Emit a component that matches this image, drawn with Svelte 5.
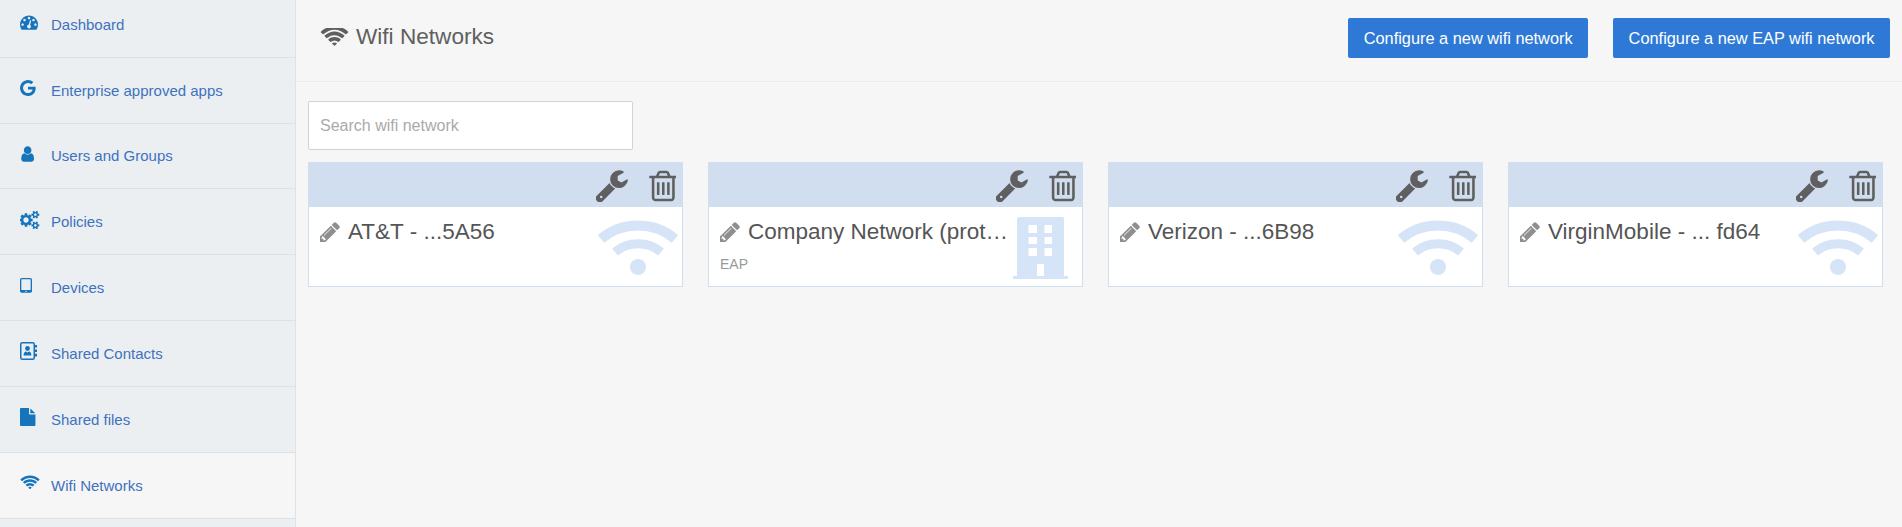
<script>
  const wifiPath = 'M1024 1523q-20 0-93-73.5t-73-93.5q0-32 62.5-54t103.5-22 103.5 22 62.5 54q0 20-73 93.5t-93 73.5zm270-271q-2 0-40-25t-101.5-50-128.5-25-128.5 25-101 50-40.5 25q-18 0-93.5-75t-75.5-93q0-13 10-23 78-77 196-121t233-44 233 44 196 121q10 10 10 23 0 18-75.5 93t-93.5 75zm273-272q-11 0-23-8-136-105-252-154.5t-268-49.5q-85 0-170.5 22t-149 53-113.5 62-79 53-31 22q-17 0-92-75t-75-93q0-12 10-22 132-132 320-205t380-73 380 73 320 205q10 10 10 22 0 18-75 93t-92 75zm271-271q-11 0-22-9-179-157-371.5-236.5t-420.5-79.5-420.5 79.5-371.5 236.5q-11 9-22 9-17 0-92.5-75t-75.5-93q0-13 10-23 187-186 445-288t527-102 527 102 445 288q10 10 10 23 0 18-75.5 93t-92.5 75z';
  const pencilPath = 'M491 1536l91-91-235-235-91 91v107h128v128h107zm523-928q0-22-22-22-10 0-17 7l-542 542q-7 7-7 17 0 22 22 22 10 0 17-7l542-542q7-7 7-17zm-54-192l416 416-832 832h-416v-416zm683 96q0 53-37 90l-166 166-416-416 166-165q36-38 90-38 53 0 91 38l235 234q37 39 37 91z';
  const wrenchPath = 'M448 1472q0-26-19-45t-45-19-45 19-19 45 19 45 45 19 45-19 19-45zm644-420l-682 682q-37 37-90 37-52 0-91-37l-106-108q-38-36-38-90 0-53 38-91l681-681q39 98 114.5 173.5t173.5 114.5zm634-435q0 39-23 106-47 134-164.5 217.5t-258.5 83.5q-185 0-316.5-131.5t-131.5-316.5 131.5-316.5 316.5-131.5q58 0 121.5 16.5t107.5 46.5q16 11 16 28t-16 28l-293 169v224l193 107q5-3 79-48.5t135.5-81 70.5-35.5q15 0 23.5 10t8.5 25z';
  const trashPath = 'M704 736v576q0 14-9 23t-23 9h-64q-14 0-23-9t-9-23v-576q0-14 9-23t23-9h64q14 0 23 9t9 23zm256 0v576q0 14-9 23t-23 9h-64q-14 0-23-9t-9-23v-576q0-14 9-23t23-9h64q14 0 23 9t9 23zm256 0v576q0 14-9 23t-23 9h-64q-14 0-23-9t-9-23v-576q0-14 9-23t23-9h64q14 0 23 9t9 23zm128 724v-948h-896v948q0 22 7 40.5t14.5 27 10.5 8.5h832q3 0 10.5-8.5t14.5-27 7-40.5zm-672-1076h448l-48-117q-7-9-17-11h-317q-10 2-17 11zm928 32v64q0 14-9 23t-23 9h-96v948q0 83-47 143.5t-113 60.5h-832q-66 0-113-58.5t-47-141.5v-952h-96q-14 0-23-9t-9-23v-64q0-14 9-23t23-9h309l70-167q15-37 54-63t79-26h320q40 0 79 26t54 63l70 167h309q14 0 23 9t9 23z';

  const nav = [
    { label: 'Dashboard', box: '0 0 1792 1792', w: 18, path: 'M384 1152q0-53-37.5-90.5t-90.5-37.5-90.5 37.5-37.5 90.5 37.5 90.5 90.5 37.5 90.5-37.5 37.5-90.5zm192-448q0-53-37.5-90.5t-90.5-37.5-90.5 37.5-37.5 90.5 37.5 90.5 90.5 37.5 90.5-37.5 37.5-90.5zm428 481l101-382q6-26-7.5-48.5t-38.5-29.5-48 6.5-30 39.5l-101 382q-60 5-107 43.5t-63 98.5q-20 77 20 146t117 89 146-20 89-117q16-60-6-117t-72-91zm660-33q0-53-37.5-90.5t-90.5-37.5-90.5 37.5-37.5 90.5 37.5 90.5 90.5 37.5 90.5-37.5 37.5-90.5zm-640-640q0-53-37.5-90.5t-90.5-37.5-90.5 37.5-37.5 90.5 37.5 90.5 90.5 37.5 90.5-37.5 37.5-90.5zm448 192q0-53-37.5-90.5t-90.5-37.5-90.5 37.5-37.5 90.5 37.5 90.5 90.5 37.5 90.5-37.5 37.5-90.5zm320 448q0 261-141 483-19 29-54 29h-1402q-35 0-54-29-141-221-141-483 0-182 71-348t191-286 286-191 348-71 348 71 286 191 191 286 71 348z' },
    { label: 'Enterprise approved apps', box: '128 128 1536 1536', w: 16, path: 'M896 786h725q12 67 12 128 0 217-91 387.5t-259.5 266.5-386.5 96q-157 0-299-60.5t-245-163.5-163.5-245-60.5-299 60.5-299 163.5-245 245-163.5 299-60.5q300 0 515 201l-209 201q-123-119-306-119-129 0-238.5 65t-173.5 176.5-64 243.5 64 243.5 173.5 176.5 238.5 65q87 0 160-24t120-60 82-82 51.5-87 22.5-78h-436v-264z' },
    { label: 'Users and Groups', box: '128 128 1408 1536', w: 14, path: 'M1536 1399q0 109-62.5 187t-150.5 78h-854q-88 0-150.5-78t-62.5-187q0-85 8.5-160.5t31.5-152 58.5-131 94-89 134.5-34.5q131 128 313 128t313-128q76 0 134.5 34.5t94 89 58.5 131 31.5 152 8.5 160.5zm-256-887q0 159-112.5 271.5t-271.5 112.5-271.5-112.5-112.5-271.5 112.5-271.5 271.5-112.5 271.5 112.5 112.5 271.5z' },
    { label: 'Policies', box: '0 128 1920 1536', w: 20, path: 'M832 896q0-106-75-181t-181-75-181 75-75 181 75 181 181 75 181-75 75-181zm768 512q0-52-38-90t-90-38-90 38-38 90q0 53 37.5 90.5t90.5 37.5 90.5-37.5 37.5-90.5zm0-1024q0-52-38-90t-90-38-90 38-38 90q0 53 37.5 90.5t90.5 37.5 90.5-37.5 37.5-90.5zm-384 421v185q0 10-7 19.5t-16 10.5l-155 24q-11 35-32 76 34 48 90 115 7 11 7 20 0 12-7 19-23 30-82.5 89.5t-78.5 59.5q-11 0-21-7l-115-90q-37 19-77 31-11 108-23 155-7 24-30 24h-186q-11 0-20-7.5t-10-17.5l-23-153q-34-10-75-31l-118 89q-7 7-20 7-11 0-21-8-144-133-144-160 0-9 7-19 10-14 41-53t47-61q-23-44-35-82l-152-24q-10-1-17-9.5t-7-19.5v-185q0-10 7-19.5t16-10.5l155-24q11-35 32-76-34-48-90-115-7-11-7-20 0-12 7-20 22-30 82-89t79-59q11 0 21 7l115 90q34-18 77-32 11-108 23-154 7-24 30-24h186q11 0 20 7.5t10 17.5l23 153q34 10 75 31l118-89q8-7 20-7 11 0 21 8 144 133 144 160 0 8-7 19-12 16-42 54t-45 60q23 48 34 82l152 23q10 2 17 10.5t7 19.5zm640 533v140q0 16-149 31-12 27-30 52 51 113 51 138 0 4-4 7-122 71-124 71-8 0-46-47t-52-68q-20 2-30 2t-30-2q-14 21-52 68t-46 47q-2 0-124-71-4-3-4-7 0-25 51-138-18-25-30-52-149-15-149-31v-140q0-16 149-31 13-29 30-52-51-113-51-138 0-4 4-7 4-2 35-20t59-34 30-16q8 0 46 46.5t52 67.5q20-2 30-2t30 2q51-71 92-112l6-2q4 0 124 70 4 3 4 7 0 25-51 138 17 23 30 52 149 15 149 31zm0-1024v140q0 16-149 31-12 27-30 52 51 113 51 138 0 4-4 7-122 71-124 71-8 0-46-47t-52-68q-20 2-30 2t-30-2q-14 21-52 68t-46 47q-2 0-124-71-4-3-4-7 0-25 51-138-18-25-30-52-149-15-149-31v-140q0-16 149-31 13-29 30-52-51-113-51-138 0-4 4-7 4-2 35-20t59-34 30-16q8 0 46 46.5t52 67.5q20-2 30-2t30 2q51-71 92-112l6-2q4 0 124 70 4 3 4 7 0 25-51 138 17 23 30 52 149 15 149 31z' },
    { label: 'Devices', box: '320 128 1152 1536', w: 12, path: 'M960 1408q0-26-19-45t-45-19-45 19-19 45 19 45 45 19 45-19 19-45zm384-160v-960q0-13-9.5-22.5t-22.5-9.5h-832q-13 0-22.5 9.5t-9.5 22.5v960q0 13 9.5 22.5t22.5 9.5h832q13 0 22.5-9.5t9.5-22.5zm128-960v1088q0 66-47 113t-113 47h-832q-66 0-113-47t-47-113v-1088q0-66 47-113t113-47h832q66 0 113 47t47 113z' },
    { label: 'Shared Contacts', contacts: true },
    { label: 'Shared files', box: '128 0 1536 1792', w: 16, path: 'M1152 512v-472q22 14 36 28l408 408q14 14 28 36h-472zm-128 32q0 40 28 68t68 28h544v1056q0 40-28 68t-68 28h-1344q-40 0-68-28t-28-68v-1600q0-40 28-68t68-28h800v544z' },
    { label: 'Wifi Networks', box: '0 256 2048 1280', w: 20, path: wifiPath, active: true }
  ];

  const networks = [
    { name: 'AT&T - ...5A56' },
    { name: 'Company Network (protected)', sub: 'EAP', building: true },
    { name: 'Verizon - ...6B98' },
    { name: 'VirginMobile - ... fd64' }
  ];
</script>

<div class="page">
  <nav class="sidebar">
    {#each nav as item}
      <a class="nav-item" class:active={item.active} href="#top">
        <span class="nav-icon">
          {#if item.contacts}
            <svg width="17" height="18" viewBox="0 0 17 18">
              <rect x="0.75" y="0.75" width="13.5" height="16.5" rx="1.5" fill="none" stroke="currentColor" stroke-width="1.5" />
              <circle cx="7.5" cy="6.5" r="2.4" fill="currentColor" />
              <path d="M3.6 13.6c0-2.6 1.2-4 2.2-4l1.7 .8 1.7-.8c1 0 2.2 1.4 2.2 4z" fill="currentColor" />
              <path d="M15 3h2v2.6h-2zM15 7.4h2V10h-2zM15 11.8h2v2.6h-2z" fill="currentColor" />
            </svg>
          {:else}
            <svg width={item.w} height="18" viewBox={item.box} preserveAspectRatio="xMinYMid meet">
              <path d={item.path} fill="currentColor" />
            </svg>
          {/if}
        </span>
        <span class="nav-label">{item.label}</span>
      </a>
    {/each}
  </nav>

  <main class="content">
    <header class="topbar">
      <h1 class="title">
        <svg width="29" height="18" viewBox="0 256 2048 1280"><path d={wifiPath} fill="currentColor" /></svg>
        Wifi Networks
      </h1>
      <div class="actions">
        <button class="btn">Configure a new wifi network</button>
        <button class="btn">Configure a new EAP wifi network</button>
      </div>
    </header>

    <div class="body">
      <input class="search" placeholder="Search wifi network" />
      <div class="cards">
        {#each networks as net}
          <article class="card">
            <div class="card-head">
              <svg class="tool" width="32" height="33" viewBox="128 64 1600 1664"><path d={wrenchPath} fill="currentColor" /></svg>
              <svg class="tool" width="28" height="32" viewBox="128 128 1408 1536"><path d={trashPath} fill="currentColor" /></svg>
            </div>
            <div class="card-body">
              <div class="name-row">
                <svg class="pencil" width="20" height="20" viewBox="128 128 1536 1536"><path d={pencilPath} fill="currentColor" /></svg>
                <span class="name">{net.name}</span>
              </div>
              {#if net.sub}<div class="sub">{net.sub}</div>{/if}
              {#if net.building}
                <svg class="mark building" width="55" height="62" viewBox="0 0 55 62">
                  <path fill-rule="evenodd" d="M4 2a2 2 0 0 1 2-2h43a2 2 0 0 1 2 2v57H31V47h-7v12H4zM15.500 8v8h8.500V8zM31.500 8v8h7.500V8zM15.500 20v7h8.500v-7zM31.500 20v7h7.500v-7zM15.500 31v8h8.500v-8zM31.500 31v8h7.500v-8z" />
                  <rect x="0" y="59" width="55" height="3" />
                </svg>
              {:else}
                <svg class="mark wifi" width="80" height="56" viewBox="0 0 80 56">
                  <path class="arc" d="M3 19C24 1 56 1 77 19" stroke-width="10" />
                  <path class="arc" d="M17 32C30 21 50 21 63 32" stroke-width="9" />
                  <circle cx="40" cy="47" r="8" />
                </svg>
              {/if}
            </div>
          </article>
        {/each}
      </div>
    </div>
  </main>
</div>

<style>
  :global(body) {
    background: #f6f6f6;
    font-family: 'Liberation Sans', Arial, sans-serif;
  }

  .page {
    display: flex;
    height: 527px;
    overflow: hidden;
  }

  .sidebar {
    width: 295px;
    flex: none;
    margin-top: -8px;
    height: 536px;
    background: #ebeff2;
    border-right: 1px solid #dfe3e6;
  }

  .nav-item {
    display: flex;
    align-items: center;
    box-sizing: border-box;
    height: 65.8px;
    padding: 0 0 0 20px;
    border-bottom: 1px solid #dde1e4;
    color: #3f72bd;
    font-size: 15px;
    text-decoration: none;
  }

  .nav-item.active {
    background: #f6f6f6;
    border-top: 1px solid #dde1e4;
    margin-top: -1px;
    height: 67px;
  }

  .nav-icon {
    width: 31px;
    flex: none;
    display: flex;
    color: #1574bb;
    transform: translateY(-2px);
  }

  .content {
    flex: 1;
    min-width: 0;
  }

  .topbar {
    display: flex;
    align-items: center;
    justify-content: space-between;
    box-sizing: border-box;
    height: 82px;
    padding: 0 12px 5px 320px;
    margin-left: -296px;
    border-bottom: 1px solid #ececec;
  }

  .title {
    display: flex;
    align-items: center;
    gap: 7px;
    margin: 0;
    padding-bottom: 2px;
    font-size: 22.6px;
    font-weight: 400;
    color: #5f5f5f;
  }

  .actions {
    display: flex;
    gap: 25px;
  }

  .btn {
    height: 40px;
    padding: 0 15.5px;
    border: 0;
    border-radius: 2px;
    background: #2f79d6;
    color: #fff;
    font: 16.35px 'Liberation Sans', Arial, sans-serif;
  }

  .body {
    padding: 19px 12px 0;
  }

  .search {
    display: block;
    box-sizing: border-box;
    width: 325px;
    height: 49px;
    padding: 0 11px;
    border: 1px solid #d2d2d2;
    border-radius: 2px;
    background: #fff;
    font: 16px 'Liberation Sans', Arial, sans-serif;
  }

  .search::placeholder {
    color: #aaa;
    opacity: 1;
  }

  .cards {
    display: flex;
    gap: 25px;
    margin-top: 12px;
  }

  .card {
    box-sizing: border-box;
    width: 375px;
    height: 125px;
    border: 1px solid #d1deef;
    background: #fff;
  }

  .card-head {
    display: flex;
    justify-content: flex-end;
    align-items: center;
    gap: 20px;
    height: 45px;
    margin: -1px -1px 0;
    padding: 2px 7px 0 0;
    box-sizing: border-box;
    background: #d1deef;
    color: #5f5f5f;
  }

  .tool {
    display: block;
    flex: none;
  }

  .card-body {
    position: relative;
    padding: 10px 12px 0 11px;
  }

  .name-row {
    display: flex;
    align-items: center;
    gap: 8px;
  }

  .pencil {
    flex: none;
    color: #8f8f8f;
  }

  .name {
    max-width: 268px;
    overflow: hidden;
    white-space: nowrap;
    text-overflow: ellipsis;
    font-size: 22.5px;
    line-height: 30px;
    color: #555;
  }

  .sub {
    margin-top: 9px;
    font-size: 14px;
    color: #999;
  }

  .mark {
    position: absolute;
    fill: #d5e4f7;
  }

  .arc {
    fill: none;
    stroke: #d5e4f7;
  }

  .wifi {
    right: 4px;
    top: 13px;
  }

  .building {
    right: 14px;
    top: 10px;
  }
</style>
